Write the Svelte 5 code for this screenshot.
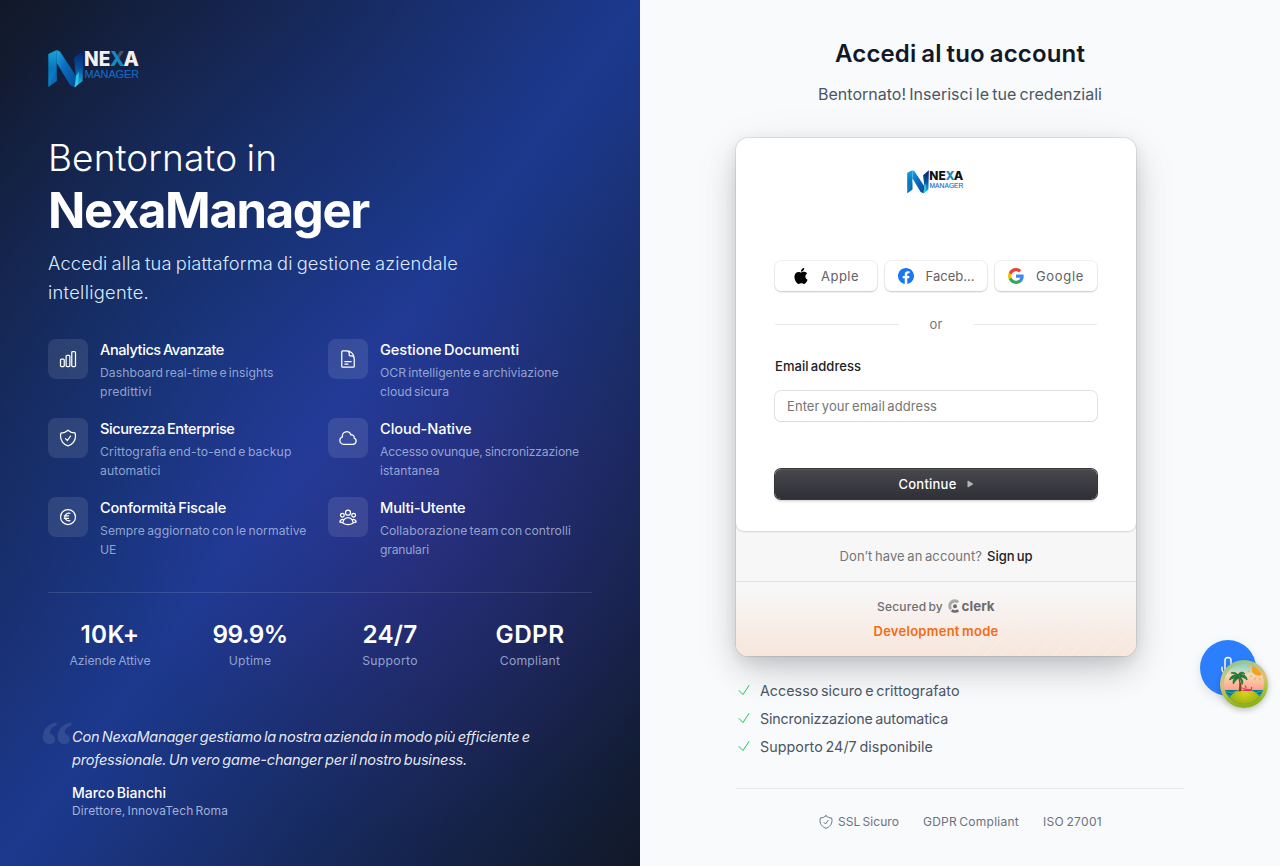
<script>
  // Spreads the letters of a line so that it spans the given measure.
  function fit(node, width) {
    const chars = node.textContent.trim().length;
    node.style.letterSpacing = '0px';
    const natural = node.getBoundingClientRect().width;
    node.style.letterSpacing = `${(width - natural) / chars}px`;
  }

  const icons = {
    chart: 'M3 13.125C3 12.504 3.504 12 4.125 12h2.25c.621 0 1.125.504 1.125 1.125v6.75C7.5 20.496 6.996 21 6.375 21h-2.25A1.125 1.125 0 0 1 3 19.875v-6.75ZM9.75 8.625c0-.621.504-1.125 1.125-1.125h2.25c.621 0 1.125.504 1.125 1.125v11.25c0 .621-.504 1.125-1.125 1.125h-2.25a1.125 1.125 0 0 1-1.125-1.125V8.625ZM16.5 4.125c0-.621.504-1.125 1.125-1.125h2.25C20.496 3 21 3.504 21 4.125v15.75c0 .621-.504 1.125-1.125 1.125h-2.25a1.125 1.125 0 0 1-1.125-1.125V4.125Z',
    document: 'M19.5 14.25v-2.625a3.375 3.375 0 0 0-3.375-3.375h-1.5A1.125 1.125 0 0 1 13.5 7.125v-1.5a3.375 3.375 0 0 0-3.375-3.375H8.25m0 12.75h7.5m-7.5 3H12M10.5 2.25H5.625c-.621 0-1.125.504-1.125 1.125v17.25c0 .621.504 1.125 1.125 1.125h12.75c.621 0 1.125-.504 1.125-1.125V11.25a9 9 0 0 0-9-9Z',
    shield: 'M9 12.75 11.25 15 15 9.75m-3-7.036A11.959 11.959 0 0 1 3.598 6 11.99 11.99 0 0 0 3 9.749c0 5.592 3.824 10.29 9 11.623 5.176-1.332 9-6.03 9-11.622 0-1.31-.21-2.571-.598-3.751h-.152c-3.196 0-6.1-1.248-8.25-3.285Z',
    cloud: 'M2.25 15a4.5 4.5 0 0 0 4.5 4.5H18a3.75 3.75 0 0 0 1.332-7.257 3 3 0 0 0-3.758-3.848 5.25 5.25 0 0 0-10.233 2.33A4.502 4.502 0 0 0 2.25 15Z',
    euro: 'M14.25 7.756a4.5 4.5 0 1 0 0 8.488M7.5 10.5h5.25m-5.25 3h5.25M21 12a9 9 0 1 1-18 0 9 9 0 0 1 18 0Z',
    users: 'M18 18.72a9.094 9.094 0 0 0 3.741-.479 3 3 0 0 0-4.682-2.72m.94 3.198.001.031c0 .225-.012.447-.037.666A11.944 11.944 0 0 1 12 21c-2.17 0-4.207-.576-5.963-1.584A6.062 6.062 0 0 1 6 18.719m12 0a5.971 5.971 0 0 0-.941-3.197m0 0A5.995 5.995 0 0 0 12 12.75a5.995 5.995 0 0 0-5.058 2.772m0 0a3 3 0 0 0-4.681 2.72 8.986 8.986 0 0 0 3.74.477m.94-3.197a5.971 5.971 0 0 0-.94 3.197M15 6.75a3 3 0 1 1-6 0 3 3 0 0 1 6 0Zm6 3a2.25 2.25 0 1 1-4.5 0 2.25 2.25 0 0 1 4.5 0Zm-13.5 0a2.25 2.25 0 1 1-4.5 0 2.25 2.25 0 0 1 4.5 0Z',
    check: 'm4.5 12.75 6 6 9-13.5',
    mic: 'M12 18.75a6 6 0 0 0 6-6v-1.5m-6 7.5a6 6 0 0 1-6-6v-1.5m6 7.5v3.75m-3.75 0h7.5M12 15.75a3 3 0 0 1-3-3V4.5a3 3 0 1 1 6 0v8.25a3 3 0 0 1-3 3Z'
  };

  const features = [
    { icon: 'chart', title: ['Analytics Avanzate', 124], lines: [['Dashboard real-time e insights', 173.5], ['predittivi', 51.5]] },
    { icon: 'document', title: ['Gestione Documenti', 139], lines: [['OCR intelligente e archiviazione', 178.5], ['cloud sicura', 69]] },
    { icon: 'shield', title: ['Sicurezza Enterprise', 134.5], lines: [['Crittografia end-to-end e backup', 191.5], ['automatici', 60.5]] },
    { icon: 'cloud', title: ['Cloud-Native', 91.5], lines: [['Accesso ovunque, sincronizzazione', 199], ['istantanea', 59.5]] },
    { icon: 'euro', title: ['Conformità Fiscale', 126], lines: [['Sempre aggiornato con le normative', 206.5], ['UE', 16.5]] },
    { icon: 'users', title: ['Multi-Utente', 85.5], lines: [['Collaborazione team con controlli', 191], ['granulari', 49]] }
  ];

  const stats = [
    { value: '10K+', vw: 59, label: 'Aziende Attive', lw: 81 },
    { value: '99.9%', vw: 75, label: 'Uptime', lw: 42.5 },
    { value: '24/7', vw: 55, label: 'Supporto', lw: 55.5 },
    { value: 'GDPR', vw: 69, label: 'Compliant', lw: 60.5 }
  ];

  const perks = [
    ['Accesso sicuro e crittografato', 199.5],
    ['Sincronizzazione automatica', 188],
    ['Supporto 24/7 disponibile', 173]
  ];
</script>

{#snippet icon(name, size, stroke = 1.5)}
  <svg width={size} height={size} viewBox="0 0 24 24" fill="none" stroke="currentColor" stroke-width={stroke} stroke-linecap="round" stroke-linejoin="round"><path d={icons[name]} /></svg>
{/snippet}

{#snippet logo(id, width, ink, accent)}
  <svg {width} height={width * 40 / 92} viewBox="0 0 92 40">
    <defs>
      <linearGradient id="{id}a" x1="0" y1="0" x2="0" y2="1"><stop offset="0" stop-color="#18a4e0" /><stop offset=".5" stop-color="#0877bd" /><stop offset="1" stop-color="#0a86cc" /></linearGradient>
      <linearGradient id="{id}b" x1="0" y1="0" x2="1" y2="1"><stop offset="0" stop-color="#20a8e6" /><stop offset=".4" stop-color="#0a6fbd" /><stop offset="1" stop-color="#064a94" /></linearGradient>
      <linearGradient id="{id}c" x1="0" y1="0" x2="0" y2="1"><stop offset="0" stop-color="#08206c" /><stop offset=".5" stop-color="#0752a0" /><stop offset="1" stop-color="#22c9ec" /></linearGradient>
      <linearGradient id="{id}x" x1="0" y1="1" x2="1" y2="0"><stop offset=".56" stop-color="#118bc9" /><stop offset=".58" stop-color={accent} /></linearGradient>
    </defs>
    <polygon points="0.3,6 8.7,2 8.7,33 0.3,39" fill="url(#{id}a)" />
    <polygon points="8.7,2 12,3.5 28,28 27,39.5 22,37 8.7,15" fill="url(#{id}b)" />
    <polygon points="26,10 35.3,2 34.6,33 26.5,39.5 28,28" fill="url(#{id}c)" />
    <polygon points="8.7,33 0.3,39 8.7,22" fill="#0a5fa8" opacity=".6" />
    <polygon points="27,39.5 28,28 31,24 30,36" fill="#35d5ee" opacity=".8" />
    <g font-family="Inter, sans-serif" font-weight="800" font-size="19.6" fill={ink}>
      <text x="36" y="17.800" textLength="26.4" lengthAdjust="spacingAndGlyphs">NE</text>
      <text x="62" y="17.800" textLength="14.6" lengthAdjust="spacingAndGlyphs" fill="url(#{id}x)">X</text>
      <text x="75.6" y="17.800" textLength="15.4" lengthAdjust="spacingAndGlyphs">A</text>
    </g>
    <text x="36.4" y="30.2" font-family="Liberation Sans, sans-serif" font-size="11.7" fill="#1468c4" stroke="#1468c4" stroke-width=".2" textLength="54.6" lengthAdjust="spacingAndGlyphs">MANAGER</text>
  </svg>
{/snippet}

<main class="page">
  <section class="hero">
    <div class="brand">{@render logo('h', 92, '#f1f1f3', '#4a505c')}</div>
    <h1>
      <span class="light" use:fit={229}>Bentornato in</span>
      <span class="bold" use:fit={321}>NexaManager</span>
    </h1>
    <p class="lead">
      <span use:fit={410}>Accedi alla tua piattaforma di gestione aziendale</span>
      <span use:fit={101}>intelligente.</span>
    </p>

    <div class="features">
      {#each features as f}
        <div class="feature">
          <div class="tile">{@render icon(f.icon, 20)}</div>
          <div class="copy">
            <h3 use:fit={f.title[1]}>{f.title[0]}</h3>
            {#each f.lines as line}<span use:fit={line[1]}>{line[0]}</span>{/each}
          </div>
        </div>
      {/each}
    </div>

    <div class="stats">
      {#each stats as s}
        <div class="stat"><strong use:fit={s.vw}>{s.value}</strong><span use:fit={s.lw}>{s.label}</span></div>
      {/each}
    </div>

    <blockquote>
      <i class="mark">“</i>
      <em use:fit={458}>Con NexaManager gestiamo la nostra azienda in modo più efficiente e</em>
      <em use:fit={395}>professionale. Un vero game-changer per il nostro business.</em>
      <b use:fit={94}>Marco Bianchi</b>
      <small use:fit={156}>Direttore, InnovaTech Roma</small>
    </blockquote>
  </section>

  <section class="side">
    <h2><span use:fit={250}>Accedi al tuo account</span></h2>
    <p class="sub"><span use:fit={284}>Bentornato! Inserisci le tue credenziali</span></p>

    <div class="card">
      <div class="form">
        <div class="form-logo">{@render logo('c', 57, '#101014', '#1b7fc4')}</div>
        <div class="social">
          <button>
            <svg width="16" height="16" viewBox="0 0 24 24"><path d="M12.152 6.896c-.948 0-2.415-1.078-3.96-1.04-2.04.027-3.91 1.183-4.961 3.014-2.117 3.675-.546 9.103 1.519 12.09 1.013 1.454 2.208 3.09 3.792 3.039 1.52-.065 2.09-.987 3.935-.987 1.831 0 2.35.987 3.96.948 1.637-.026 2.676-1.48 3.676-2.948 1.156-1.688 1.636-3.325 1.662-3.415-.039-.013-3.182-1.221-3.22-4.857-.026-3.04 2.48-4.494 2.597-4.559-1.429-2.09-3.623-2.324-4.39-2.376-2-.156-3.675 1.09-4.61 1.09zM15.53 3.83c.843-1.012 1.4-2.427 1.245-3.83-1.207.052-2.662.805-3.532 1.818-.78.896-1.454 2.338-1.273 3.714 1.338.104 2.715-.688 3.559-1.701" /></svg>
            <span use:fit={38}>Apple</span>
          </button>
          <button>
            <svg width="16" height="16" viewBox="0 0 24 24"><path fill="#1877f2" d="M24 12.073c0-6.627-5.373-12-12-12s-12 5.373-12 12c0 5.99 4.388 10.954 10.125 11.854v-8.385H7.078v-3.47h3.047V9.43c0-3.007 1.792-4.669 4.533-4.669 1.312 0 2.686.235 2.686.235v2.953H15.83c-1.491 0-1.956.925-1.956 1.874v2.25h3.328l-.532 3.47h-2.796v8.385C19.612 23.027 24 18.062 24 12.073z" /></svg>
            <span use:fit={49}>Faceb…</span>
          </button>
          <button>
            <svg width="16" height="16" viewBox="1 1 22 22"><path fill="#4285f4" d="M22.56 12.25c0-.78-.07-1.53-.2-2.25H12v4.26h5.92c-.26 1.37-1.04 2.53-2.21 3.31v2.77h3.57c2.08-1.92 3.28-4.74 3.28-8.09z" /><path fill="#34a853" d="M12 23c2.97 0 5.46-.98 7.28-2.66l-3.57-2.77c-.98.66-2.23 1.06-3.71 1.06-2.86 0-5.29-1.93-6.16-4.53H2.18v2.84C3.99 20.53 7.7 23 12 23z" /><path fill="#fbbc05" d="M5.84 14.09c-.22-.66-.35-1.36-.35-2.09s.13-1.43.35-2.09V7.07H2.18C1.43 8.55 1 10.22 1 12s.43 3.45 1.18 4.93l3.66-2.84z" /><path fill="#ea4335" d="M12 5.38c1.62 0 3.06.56 4.21 1.64l3.15-3.15C17.45 2.09 14.97 1 12 1 7.7 1 3.99 3.47 2.18 7.07l3.66 2.84c.87-2.6 3.3-4.53 6.16-4.53z" /></svg>
            <span use:fit={48}>Google</span>
          </button>
        </div>
        <div class="or"><span use:fit={13}>or</span></div>
        <label for="email"><span use:fit={86}>Email address</span></label>
        <div class="field" id="email"><span use:fit={150}>Enter your email address</span></div>
        <button class="go">
          <span use:fit={58}>Continue</span>
          <svg width="7" height="8" viewBox="0 0 7 8"><path d="M.5 1.2v5.6c0 .4.4.6.7.4l4.6-2.8a.5.5 0 0 0 0-.8L1.2.8C.9.6.5.8.5 1.2Z" fill="#b4b4b8" /></svg>
        </button>
      </div>
      <div class="signup"><span use:fit={142.5}>Don’t have an account?</span><b use:fit={45.5}>Sign up</b></div>
      <div class="dev">
        <svg class="rays" width="170" height="75" viewBox="0 0 170 75" stroke="#fff" stroke-opacity=".35">
          {#each [0, 1, 2, 3, 4, 5, 6, 7, 8, 9] as i}<line x1={1 + i * 17.2} y1="75" x2={76 + i * 17.2} y2="0" />{/each}
        </svg>
        <div class="secured">
          <span use:fit={66}>Secured by</span>
          <svg width="47" height="14" viewBox="0 0 47 14">
            <path d="M11.2 2.3 9.2 4.3A3.7 3.7 0 0 0 3.9 9.3L2 11.2A6.400 6.400 0 0 1 11.200 2.300Z" fill="#aaaaad" />
            <circle cx="7" cy="7.200" r="2" fill="#6c6c70" />
            <path d="m11.200 12.200-1.900-1.900a3.900 3.900 0 0 1-4.600 0l-1.900 1.900a6.400 6.400 0 0 0 8.400 0Z" fill="#6c6c70" />
            <text x="13.600" y="11.500" font-family="Inter, sans-serif" font-size="13.500" font-weight="700" fill="#6c6c70" textLength="33" lengthAdjust="spacingAndGlyphs">clerk</text>
          </svg>
        </div>
        <b class="mode"><span use:fit={125}>Development mode</span></b>
      </div>
    </div>

    <ul class="perks">
      {#each perks as p}<li>{@render icon('check', 16, 1.5)}<span use:fit={p[1]}>{p[0]}</span></li>{/each}
    </ul>
    <div class="trust">
      <span class="ssl">{@render icon('shield', 16, 1.5)}<span use:fit={61}>SSL Sicuro</span></span>
      <span use:fit={96}>GDPR Compliant</span>
      <span use:fit={59}>ISO 27001</span>
    </div>
  </section>

  <div class="voice">{@render icon('mic', 24)}</div>
  <div class="island">
    <svg width="48" height="48" viewBox="0 0 48 48">
      <defs>
        <linearGradient id="rim" x1=".1" y1="0" x2=".3" y2="1"><stop offset="0" stop-color="#86c38c" /><stop offset=".25" stop-color="#b7c787" /><stop offset=".5" stop-color="#e0bf78" /><stop offset=".72" stop-color="#a8c63a" /><stop offset="1" stop-color="#8cb01e" /></linearGradient>
        <linearGradient id="sky" x1="0" y1="0" x2="0" y2="1"><stop offset=".08" stop-color="#7fd3cc" /><stop offset=".32" stop-color="#f3dcb6" /><stop offset=".52" stop-color="#fdb49a" /><stop offset=".68" stop-color="#ff9684" /></linearGradient>
        <radialGradient id="hill" cx=".5" cy=".15" r=".8"><stop offset="0" stop-color="#d6d61c" /><stop offset="1" stop-color="#7d9e10" /></radialGradient>
        <clipPath id="disc"><circle cx="24" cy="24" r="20" /></clipPath>
      </defs>
      <circle cx="24" cy="24" r="24" fill="url(#rim)" />
      <g clip-path="url(#disc)">
        <rect width="48" height="48" fill="url(#sky)" />
        <rect y="30" width="48" height="18" fill="#11748a" />
        <path d="M2 32q3-2 6 0t6 0 6 0 6 0 6 0 6 0 6 0M2 35.500q3-2 6 0t6 0 6 0 6 0 6 0 6 0 6 0" fill="none" stroke="#23b0b8" />
        <path d="M29.500 7l-2.500-.5M30 11l-2.500 1M32 15l-1.500 2M35.500 17.500l-.7 2.500M40 18v2.500" stroke="#ffb02e" stroke-width="1.200" />
        <circle cx="38.500" cy="9" r="6.800" fill="#ff9d1c" />
        <ellipse cx="25" cy="40.500" rx="15.500" ry="11" fill="url(#hill)" />
        <path d="M17.500 17c2.500 4 2 9 1 14.500l3-.5c.3-5-.5-10-3-14Z" fill="#80401f" />
        <path d="M18 16c-3-2-7-1-8.500 4 3-2 5-2 8.500-3-3 0-6 3-4.500 7 1-3 3-4 5-6 2.500 1 3 4 3.500 6.500 2-3 0-5.500-2-7.500 3 0 5 1 7 3 0-4-3-6-7-5 1-1 3-2 5-1-2-3-6-2-7 1-2-3-5-3-7-2 3 .5 5 1 7 3Z" fill="#23833a" stroke="#196a31" stroke-width=".8" />
        <path d="M22.500 28l3 1.500h6v-2.500M25 25.500l1.500 3M22.500 30.500h8.500" stroke="#e8336d" stroke-width="1.200" fill="none" />
      </g>
    </svg>
  </div>
</main>

<style>
  :global(body) { background: #f9fafc; }
  * { box-sizing: border-box; }
  .page { display: grid; grid-template-columns: 640px 640px; height: 866px; overflow: hidden; font-family: Inter, 'Open Sans', sans-serif; word-spacing: -.08em; position: relative; -webkit-font-smoothing: antialiased; }
  h1, h2, h3, p, blockquote, ul { margin: 0; padding: 0; }
  svg { display: block; flex: none; overflow: visible; }
  span, em, small, b, strong, h3 { white-space: nowrap; }

  .hero { padding: 48px; color: #fff; background:
    radial-gradient(circle at 30% 40%, rgba(20, 90, 200, .12), rgba(20, 90, 200, 0) 50%),
    radial-gradient(circle at 66% 60%, rgba(130, 45, 215, .15), rgba(130, 45, 215, 0) 47%),
    linear-gradient(to bottom right, #111827 0%, #1c398e 50%, #111827 100%); }
  .brand { height: 86px; }
  h1 { display: flex; flex-direction: column; align-items: flex-start; }
  .light { font-size: 37px; font-weight: 300; line-height: 48px; }
  .bold { font-size: 49px; font-weight: 650; line-height: 58px; }
  .lead { display: flex; flex-direction: column; align-items: flex-start; margin-top: 9px; font-size: 18.300px; line-height: 29px; font-weight: 320; color: #dbeafe; }

  .features { display: grid; grid-template-columns: 264px 264px; gap: 16px; margin-top: 32px; }
  .feature { display: flex; gap: 12px; height: 63px; }
  .tile { width: 40px; height: 40px; flex: none; border-radius: 8px; background: rgba(255, 255, 255, .1); display: grid; place-items: center; }
  .copy { display: flex; flex-direction: column; align-items: flex-start; font-size: 12.200px; line-height: 19px; color: rgba(200, 215, 245, .7); }
  h3 { font-size: 14.600px; line-height: 22px; font-weight: 550; color: #fff; margin-bottom: 2px; }

  .stats { display: grid; grid-template-columns: repeat(4, 124px); gap: 16px; margin-top: 32px; padding-top: 24px; border-top: 1px solid rgba(255, 255, 255, .12); }
  .stat { display: flex; flex-direction: column; align-items: center; }
  .stat strong { font-size: 24.300px; line-height: 34px; font-weight: 620; }
  .stat span { font-size: 12.200px; line-height: 20px; color: rgba(200, 215, 245, .7); }

  blockquote { position: relative; display: flex; flex-direction: column; align-items: flex-start; margin-top: 55px; padding-left: 24px; }
  .mark { position: absolute; left: -12px; top: -18px; font: italic 700 72px/76px 'Liberation Serif', serif; color: rgba(255, 255, 255, .1); }
  em { font-size: 14.600px; line-height: 23px; color: rgba(255, 255, 255, .9); }
  blockquote b { margin-top: 11px; font-size: 14px; font-weight: 550; line-height: 20px; }
  small { font-size: 12px; line-height: 16px; color: rgba(200, 215, 245, .78); }

  .side { background: #f9fafc; padding: 36px 96px 0; }
  h2 { text-align: center; font-size: 24px; font-weight: 620; line-height: 36px; color: #111827; }
  .sub { text-align: center; margin: 10px 0 32px; font-size: 16px; line-height: 24px; color: #4b5563; }

  .card { width: 400px; height: 518px; border-radius: 12px; background: #f7f7f7; overflow: hidden; box-shadow: 0 0 0 1px rgba(0, 0, 0, .08), 0 5px 15px rgba(0, 0, 0, .08), 0 15px 35px -5px rgba(25, 28, 33, .2), 0 10px 50px rgba(25, 28, 33, .07); }
  .form { height: 393px; padding: 31px 39px 0; border-radius: 12px 12px 8px 8px; background: #fff; box-shadow: 0 0 0 1px rgba(0, 0, 0, .04), 0 1px 2px rgba(25, 28, 33, .12); }
  .form-logo { display: flex; justify-content: center; align-items: flex-start; height: 92px; padding-right: 1px; }
  .social { display: grid; grid-template-columns: repeat(3, 102px); gap: 8px; }
  button { font-family: inherit; word-spacing: inherit; border: 0; padding: 0; display: flex; justify-content: center; align-items: center; gap: 12px; height: 30px; border-radius: 6px; }
  .social button { background: #fff; color: #626266; font-size: 13px; font-weight: 430; box-shadow: 0 0 0 1px rgba(0, 0, 0, .06), 0 1px 2px rgba(0, 0, 0, .1), 0 2px 3px -1px rgba(0, 0, 0, .08); }
  .or { display: grid; grid-template-columns: 1fr auto 1fr; align-items: center; column-gap: 31px; height: 18px; margin-top: 24px; font-size: 13px; color: #747478; }
  .or::before, .or::after { content: ''; height: 1px; background: #e9e9e9; }
  label { display: block; margin-top: 24px; font-size: 13px; font-weight: 460; line-height: 18px; color: #212126; }
  .field { display: flex; align-items: center; margin-top: 16px; height: 30px; padding-left: 12px; border-radius: 6px; font-size: 13px; color: #757575; box-shadow: 0 0 0 1px rgba(0, 0, 0, .11), 0 1px 1px rgba(0, 0, 0, .05); }
  .go { width: 322px; margin-top: 48px; height: 30px; color: #fff; font-size: 13px; font-weight: 500; gap: 10px; background: linear-gradient(#48484c, #2f3037); box-shadow: 0 0 0 1px #36373d, inset 0 1px 0 rgba(255, 255, 255, .09), 0 2px 3px rgba(34, 42, 53, .25); }
  .signup { display: flex; justify-content: center; gap: 5px; height: 50px; line-height: 50px; font-size: 13px; color: #757578; }
  .signup b { font-weight: 460; color: #212126; }
  .dev { position: relative; height: 75px; padding-top: 14px; border-top: 1px solid #e3e3e3; background: linear-gradient(#f7f7f7 10%, #f7e6dc); }
  .rays { position: absolute; right: 0; bottom: 0; overflow: hidden; -webkit-mask-image: linear-gradient(transparent 15%, #000); mask-image: linear-gradient(transparent 15%, #000); }
  .secured { position: relative; display: flex; justify-content: center; gap: 5px; height: 20px; align-items: center; font-size: 12px; font-weight: 460; color: #6f6f73; }
  .mode { position: relative; display: block; margin-top: 6px; text-align: center; line-height: 18px; font-size: 13px; font-weight: 600; color: #f36b16; }

  .perks { list-style: none; margin-top: 24px; display: flex; flex-direction: column; gap: 8px; }
  .perks li { display: flex; align-items: center; gap: 8px; height: 20px; font-size: 14.300px; color: #4b5563; }
  .perks svg { color: #22c55e; }
  .trust { display: flex; justify-content: center; align-items: center; gap: 24px; margin-top: 32px; padding-top: 23px; border-top: 1px solid #e5e7eb; font-size: 12px; line-height: 20px; color: #6b7280; }
  .ssl { display: flex; align-items: center; gap: 4px; }

  .voice { position: absolute; left: 1200px; top: 640px; width: 56px; height: 56px; border-radius: 50%; background: #2b7fff; color: #fff; display: grid; place-items: center; box-shadow: 0 4px 12px rgba(0, 0, 0, .1); }
  .island { position: absolute; left: 1220px; top: 660px; width: 48px; height: 48px; border-radius: 50%; box-shadow: 0 2px 6px rgba(0, 0, 0, .25); }
</style>
